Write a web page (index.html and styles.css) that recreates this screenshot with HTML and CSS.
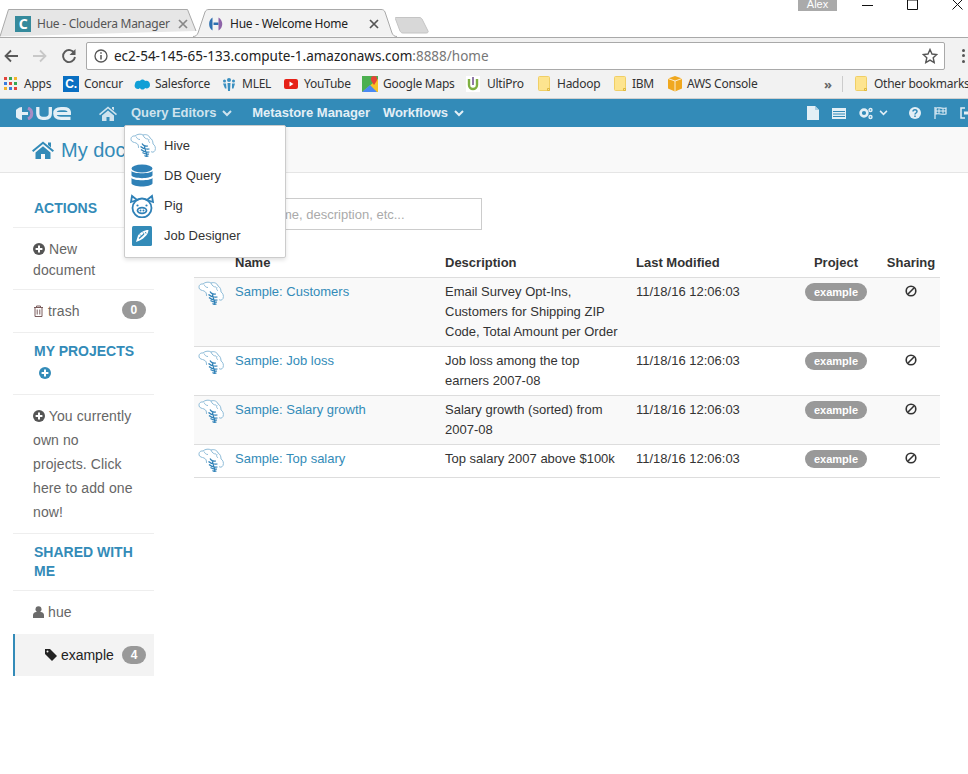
FILE: index.html
```html
<!DOCTYPE html>
<html lang="en">
<head>
<meta charset="utf-8">
<title>Hue - Welcome Home</title>
<link rel="stylesheet" href="styles.css">
</head>
<body>
<svg class="defs" width="0" height="0" aria-hidden="true">
  <symbol id="hive" viewBox="0 0 26 26">
    <path d="M1.500 8C0 5 2 2.500 5 3c2-2 6-2.500 8-1 3-1 6 0 7 3 2 1 3 3 3 6 2 1 3 4 2 6.500-1 2-3 2-4 1" fill="#fff" stroke="#8fbcd8" stroke-width="1"/>
    <path d="M1.500 8c2 2 4 1 6 3 1 1 1 3 1 4M6 3.500c1 2 2 3 4 3M13 2c1 3 3 4 5 4M19 6c-1 2 0 3 1 4" fill="none" stroke="#8fbcd8" stroke-width="1"/>
    <path d="M12 10.500c1 2 3 3 6 2.500M10.500 13.500c2 2 5 3 9 2.500M11 16.500c2 2 5 3 8.500 2.500M12.500 19.500c2 1.500 4 2 6.500 1.500M14.500 22.500c1 .8 2.500 1 4 .5M14 12l3 11" fill="none" stroke="#2f81b7" stroke-width="1.200"/>
  </symbol>
  <symbol id="ban" viewBox="0 0 12 12">
    <circle cx="6" cy="6" r="4.800" fill="none" stroke="#333" stroke-width="1.600"/>
    <path d="M2.800 9.200L9.200 2.800" stroke="#333" stroke-width="1.600"/>
  </symbol>
  <symbol id="plus" viewBox="0 0 12 12">
    <circle cx="6" cy="6" r="6"/>
    <path d="M6 2.600v6.800M2.600 6h6.800" stroke="#fff" stroke-width="2"/>
  </symbol>
  <symbol id="folder" viewBox="0 0 12 16">
    <path d="M.5 1.500A1 1 0 0 1 1.500.5h9a1 1 0 0 1 1 1v13h-10a1 1 0 0 1-1-1z" fill="#fde48f" stroke="#f0cf66"/>
    <path d="M9.500 12.500h2v2h-2z" fill="none" stroke="#e0b93f"/>
  </symbol>
  <symbol id="tabx" viewBox="0 0 10 10">
    <path d="M1 1l8 8M9 1L1 9" fill="none" stroke="currentColor" stroke-width="1.700"/>
  </symbol>
</svg>

<header class="browser">
  <div class="tabstrip">
    <div class="tab tab-back">
      <svg class="tab-shape" viewBox="0 0 197 28" width="197" height="28"><path d="M0 27.500L8.500.5H187.500L196 22" fill="#e6e6e6" stroke="#a9a9a9"/></svg>
      <span class="favicon fav-c">C</span>
      <span class="tab-title">Hue - Cloudera Manager</span>
      <svg class="tab-x" width="10" height="10"><use href="#tabx"/></svg>
    </div>
    <div class="tab tab-front">
      <svg class="tab-shape" viewBox="0 0 204 28" width="204" height="28"><path d="M0 27.500C3 27.500 4 26 5 24L12 3C13 1 14 .5 16 .5H188C190 .5 191 1 192 3L199 24C200 26 201 27.500 204 27.500" fill="#f2f2f2" stroke="#a9a9a9"/></svg>
      <svg class="favicon" viewBox="0 0 16 16" width="16" height="16"><path d="M4.500 1.500C0 4 0 12 4.500 14.500z" fill="#2d6fb0"/><path d="M5.500 6.500h5v2.500h-5z" fill="#2d6fb0"/><path d="M10.500 1.500c5 3 5 10 0 13z" fill="#8e63a8"/></svg>
      <span class="tab-title tab-title-dark">Hue - Welcome Home</span>
      <svg class="tab-x tab-x-dark" width="10" height="10"><use href="#tabx"/></svg>
    </div>
    <svg class="newtab" viewBox="0 0 34 18" width="34" height="18"><path d="M1 1.500H24C26 1.500 26 2 27 3L33 15C33.500 16 33 17 31 17H8C6 17 6 16 5 15L.5 3C0 2 0 1.500 1 1.500z" fill="#d8d8d8" stroke="#c4c4c4"/></svg>
    <div class="tab-spacer"></div>
    <span class="profile">Alex</span>
    <div class="winctl">
      <svg viewBox="0 0 11 10" width="11" height="10"><path d="M0 5.500H11" stroke="#111"/></svg>
      <svg viewBox="0 0 11 10" width="11" height="10"><path d="M.5 -1V9.500H10.500V-1" fill="none" stroke="#111"/><path d="M.5 0H10.500" stroke="#111"/></svg>
      <svg viewBox="0 0 11 10" width="11" height="10"><path d="M.5 -.5L10.500 9.500M10.500 -.5L.5 9.500" stroke="#111"/></svg>
    </div>
  </div>

  <div class="toolbar">
    <svg class="tool" viewBox="0 0 16 16" width="16" height="16"><path d="M15 8H2.500M8 2.500L2.500 8 8 13.500" fill="none" stroke="#5a5a5a" stroke-width="1.800"/></svg>
    <svg class="tool" viewBox="0 0 16 16" width="16" height="16"><path d="M1 8h12.500M8 2.500L13.500 8 8 13.500" fill="none" stroke="#c8c8c8" stroke-width="1.800"/></svg>
    <svg class="tool" viewBox="0 0 16 16" width="16" height="16"><path d="M13.500 5.500A6 6 0 1 0 14 9" fill="none" stroke="#5a5a5a" stroke-width="1.900"/><path d="M14.500 1v6h-6z" fill="#5a5a5a"/></svg>
    <div class="omnibox">
      <svg class="info" viewBox="0 0 14 14" width="14" height="14"><circle cx="7" cy="7" r="6" fill="none" stroke="#555" stroke-width="1.300"/><path d="M7 6v4.500M7 3.300v1.500" stroke="#555" stroke-width="1.500"/></svg>
      <span class="url">ec2-54-145-65-133.compute-1.amazonaws.com<span class="url-dim">:8888/home</span></span>
      <svg class="star" viewBox="0 0 16 16" width="16" height="16"><path d="M8 1.500l2 4.500 4.800.5-3.600 3.200 1 4.800L8 12.100l-4.200 2.400 1-4.800L1.200 6.500 6 6z" fill="none" stroke="#555" stroke-width="1.400"/></svg>
    </div>
    <div class="kebab"><i></i><i></i><i></i></div>
  </div>

  <div class="bookmarks">
    <span class="bm bm-apps">
      <svg viewBox="0 0 14 14" width="14" height="14"><g><rect width="3" height="3" fill="#e2453c"/><rect x="5" width="3" height="3" fill="#35a853"/><rect x="10" width="3" height="3" fill="#f3b32a"/><rect y="5" width="3" height="3" fill="#3b7de0"/><rect x="5" y="5" width="3" height="3" fill="#e2453c"/><rect x="10" y="5" width="3" height="3" fill="#35a853"/><rect y="10" width="3" height="3" fill="#f3b32a"/><rect x="5" y="10" width="3" height="3" fill="#3b7de0"/><rect x="10" y="10" width="3" height="3" fill="#e2453c"/></g></svg>
      Apps</span>
    <span class="bm bm-concur"><span class="ico-concur">C.</span>Concur</span>
    <span class="bm bm-sf"><svg viewBox="0 0 16 12" width="16" height="12"><path d="M4 11C1 11 0 8 1 6c0-3 3-4 5-3 1-2 4-2 5 0 3-1 5 1 5 4s-3 4-5 3c-1 2-4 2-5 0-1 1-2 1-2 1z" fill="#109fd6"/></svg>Salesforce</span>
    <span class="bm bm-mlel"><svg viewBox="0 0 16 16" width="16" height="16"><g fill="#3a8fc0"><circle cx="8" cy="4" r="2"/><circle cx="3.500" cy="5" r="1.500"/><circle cx="12.500" cy="5" r="1.500"/><path d="M6.500 7h3l-.5 8H7zM2 7.500h3l.5 5H4zM11 7.500h3l-1.500 5h-1.500z"/></g></svg>MLEL</span>
    <span class="bm bm-yt"><svg viewBox="0 0 14 10" width="14" height="10"><rect width="14" height="10" rx="2" fill="#e62117"/><path d="M5.500 2.500v5l4-2.500z" fill="#fff"/></svg>YouTube</span>
    <span class="bm bm-maps"><svg viewBox="0 0 16 16" width="16" height="16"><path d="M0 0h16v16H0z" fill="#4caf50"/><path d="M0 16L16 3v13z" fill="#f7c325"/><path d="M0 16L8 9l7 7z" fill="#4a89f3"/><path d="M12 0c-3 0-4 3-2 6l2 3 2-3c2-3 1-6-2-6z" fill="#e64335"/></svg>Google Maps</span>
    <span class="bm bm-ulti"><svg viewBox="0 0 14 16" width="14" height="16"><rect width="14" height="16" fill="#fff"/><path d="M3 3v6a4 4 0 0 0 8 0V3" fill="none" stroke="#7fb042" stroke-width="2.400"/><path d="M7 1v8" stroke="#6b4d8a" stroke-width="1.500"/></svg>UltiPro</span>
    <span class="bm bm-hadoop"><svg width="12" height="16"><use href="#folder"/></svg>Hadoop</span>
    <span class="bm bm-ibm"><svg width="12" height="16"><use href="#folder"/></svg>IBM</span>
    <span class="bm bm-aws"><svg viewBox="0 0 16 16" width="16" height="16"><path d="M8 0l7 2.500v10L8 15.500 1 12.500v-10z" fill="#f0a81f"/><path d="M1 2.500L8 5l7-2.500M8 5v10.500" fill="none" stroke="#fff" stroke-width=".8"/></svg>AWS Console</span>
    <span class="bm-more">»</span>
    <span class="bm-sep"></span>
    <span class="bm bm-other"><svg width="12" height="16"><use href="#folder"/></svg>Other bookmarks</span>
  </div>
</header>

<nav class="topnav">
  <svg class="logo" viewBox="0 0 55 13" width="55" height="13">
    <path d="M6 0A7 6.500 0 0 0 6 13zM6 5h6v3H6z" fill="#e3eff6"/>
    <path d="M12 1c5 2 5 9 0 11" fill="none" stroke="#a78cc4" stroke-width="3"/>
    <path d="M21.800 0v6.500c0 3.500 2 4.800 5 4.800h2.500c3 0 5-1.300 5-4.800V0" fill="none" stroke="#e3eff6" stroke-width="3.300"/>
    <path d="M39 6.500H53.500C53.500 3 51 1.600 48 1.600H45C41 1.600 38.800 3 38.800 6.500C38.800 10 41 11.400 45 11.400H54.500" fill="none" stroke="#e3eff6" stroke-width="3.200"/>
  </svg>
  <svg class="nav-home" viewBox="0 0 18 15" width="18" height="15"><path d="M9 .5l9 7.500-1 1.200L9 2.600 1 9.200 0 8z" fill="#cfe3ee"/><path d="M3 9.500L9 4.500l6 5V15h-4.500v-4h-3v4H3z" fill="#cfe3ee"/><path d="M13 1h2v3.500l-2-1.700z" fill="#cfe3ee"/></svg>
  <span class="nav-item nav-active">Query Editors<svg class="chev" viewBox="0 0 10 7" width="10" height="7"><path d="M1 1l4 4 4-4" fill="none" stroke="currentColor" stroke-width="2"/></svg></span>
  <span class="nav-item">Metastore Manager</span>
  <span class="nav-item">Workflows<svg class="chev" viewBox="0 0 10 7" width="10" height="7"><path d="M1 1l4 4 4-4" fill="none" stroke="currentColor" stroke-width="2"/></svg></span>
  <div class="nav-spacer"></div>
  <div class="nav-tools">
    <svg viewBox="0 0 12 14" width="12" height="14"><path d="M0 0h8l4 4v10H0z" fill="#e3eff6"/><path d="M8 0v4h4" fill="#a8cde2"/></svg>
    <svg viewBox="0 0 14 11" width="14" height="11"><rect width="14" height="11" fill="#e3eff6"/><path d="M1 3.500h12M1 6h12M1 8.500h12" stroke="#338bb8"/></svg>
    <span class="nav-gears">
      <svg viewBox="0 0 14 13" width="14" height="13"><circle cx="5" cy="6" r="3.400" fill="none" stroke="#e3eff6" stroke-width="2.600"/><circle cx="11.500" cy="3" r="1.500" fill="none" stroke="#e3eff6" stroke-width="1.400"/><circle cx="11.500" cy="10" r="1.500" fill="none" stroke="#e3eff6" stroke-width="1.400"/></svg>
      <svg class="chev-light" viewBox="0 0 10 7" width="9" height="6"><path d="M1 1l4 4 4-4" fill="none" stroke="#e3eff6" stroke-width="1.800"/></svg>
    </span>
    <svg class="tool-help" viewBox="0 0 12 12" width="12" height="12"><circle cx="6" cy="6" r="6" fill="#e3eff6"/><path d="M4 4.500c0-2.500 4-2.500 4 0 0 1.500-2 1.500-2 3M6 8.500v1.500" fill="none" stroke="#338bb8" stroke-width="1.500"/></svg>
    <svg viewBox="0 0 13 12" width="13" height="12"><path d="M1 0v12" stroke="#e3eff6" stroke-width="1.200"/><path d="M2 1c3-1 5 1 10 0v6c-4 1-7-1-10 0z" fill="none" stroke="#e3eff6" stroke-width="1.200"/><path d="M5 1.500v5M9 1.500v5M2 4h10" stroke="#e3eff6"/></svg>
    <svg class="tool-exit" viewBox="0 0 13 12" width="13" height="12"><path d="M5 1H1v10h4" fill="none" stroke="#e3eff6" stroke-width="1.500"/><path d="M4 4.500h5V2l4 4-4 4V7.500H4z" fill="#e3eff6"/></svg>
  </div>

  <ul class="dropdown">
    <li><svg width="26" height="26"><use href="#hive"/></svg><span>Hive</span></li>
    <li><svg class="d-db" viewBox="0 0 22 24" width="22" height="24"><g fill="#2f81b7"><ellipse cx="11" cy="4.500" rx="10.500" ry="4"/><path d="M.5 7c2 3 19 3 21 0v4.500c-2 3.500-19 3.500-21 0zM.5 14c2 3 19 3 21 0v5.500c-2 4-19 4-21 0z"/></g></svg><span>DB Query</span></li>
    <li><svg viewBox="0 0 24 24" width="24" height="24"><g fill="none" stroke="#2f81b7" stroke-width="1.800"><circle cx="12" cy="14" r="9.500"/><path d="M7 6L1 8l1-6zM17 6l6 2-1-6z" fill="#fff"/><ellipse cx="12" cy="16.500" rx="4.500" ry="2.800"/></g><circle cx="10.500" cy="16.500" r="1" fill="#2f81b7"/><circle cx="13.500" cy="16.500" r="1" fill="#2f81b7"/><circle cx="7.500" cy="11.500" r="1.100" fill="#2f81b7"/><circle cx="16.500" cy="11.500" r="1.100" fill="#2f81b7"/></svg><span>Pig</span></li>
    <li><svg class="d-job" viewBox="0 0 20 20" width="20" height="20"><rect width="20" height="20" rx="1.500" fill="#338bb8"/><path d="M4 16L6 9.500C8 6.500 12 4 16.500 4L16 6.500C14 11 9 14.500 4 16z" fill="#fff"/><path d="M7 12.500L12 8" stroke="#338bb8" stroke-width="1.200"/><path d="M8 8.500l1.200 1.200M11 6.500l1 1.300M13.500 6l.5 1.500" stroke="#338bb8" stroke-width="1"/></svg><span>Job Designer</span></li>
  </ul>
</nav>

<div class="pagehead">
  <svg viewBox="0 0 22 18" width="22" height="18"><path d="M11 .5l11 9-1.300 1.500L11 3 1.300 11 0 9.500z" fill="#338bb8"/><path d="M3.500 11.500L11 5.300l7.500 6.200V18h-5.500v-5H9v5H3.500z" fill="#338bb8"/><path d="M16 1.500h3v5l-3-2.500z" fill="#338bb8"/></svg>
  <h1>My documents</h1>
</div>

<main class="layout">
  <aside class="sidebar">
    <h2 class="side-head side-actions">ACTIONS</h2>
    <div class="side-row side-new"><svg class="ico" width="12" height="12"><use href="#plus"/></svg> New document</div>
    <div class="side-row side-trash"><span><svg class="ico" viewBox="0 0 11 12" width="11" height="12"><path d="M1 2.500h9M3.500 2.500V1h4v1.500M2 2.500V11.500h7V2.500M4.200 4.500v5M6.800 4.500v5" fill="none" stroke="#7a5c5c" stroke-width="1"/></svg> trash</span><b class="count">0</b></div>
    <h2 class="side-head side-projects">MY PROJECTS<svg class="head-plus" width="12" height="12"><use href="#plus"/></svg></h2>
    <div class="side-row side-own"><svg class="ico" width="12" height="12"><use href="#plus"/></svg> You currently own no projects. Click here to add one now!</div>
    <h2 class="side-head side-shared">SHARED WITH ME</h2>
    <div class="side-row side-hue"><svg class="ico" viewBox="0 0 11 12" width="11" height="12"><circle cx="5.500" cy="3.200" r="3" fill="#6b6b6b"/><path d="M0 12V9c0-2 2-3 3-3h5c1 0 3 1 3 3v3z" fill="#6b6b6b"/></svg> hue</div>
    <div class="side-tag"><span><svg class="ico" viewBox="0 0 12 12" width="12" height="12"><path d="M0 0h5l7 7-5 5-7-7z" fill="#222"/><circle cx="2.500" cy="2.500" r="1" fill="#f3f3f3"/></svg> example</span><b class="count">4</b></div>
  </aside>

  <section class="content">
    <div class="search"><input class="search-input" type="text" placeholder="Search for name, description, etc..."></div>
    <table class="docs">
      <thead>
        <tr><th class="c-icon"></th><th class="c-name">Name</th><th class="c-desc">Description</th><th class="c-date">Last Modified</th><th class="c-proj">Project</th><th class="c-share">Sharing</th></tr>
      </thead>
      <tbody>
        <tr class="odd">
          <td class="c-icon"><svg width="26" height="26"><use href="#hive"/></svg></td>
          <td><a>Sample: Customers</a></td>
          <td class="c-desc">Email Survey Opt-Ins, Customers for Shipping ZIP Code, Total Amount per Order</td>
          <td>11/18/16 12:06:03</td>
          <td class="c-proj"><span class="pill">example</span></td>
          <td class="c-share"><svg width="12" height="12"><use href="#ban"/></svg></td>
        </tr>
        <tr>
          <td class="c-icon"><svg width="26" height="26"><use href="#hive"/></svg></td>
          <td><a>Sample: Job loss</a></td>
          <td class="c-desc">Job loss among the top earners 2007-08</td>
          <td>11/18/16 12:06:03</td>
          <td class="c-proj"><span class="pill">example</span></td>
          <td class="c-share"><svg width="12" height="12"><use href="#ban"/></svg></td>
        </tr>
        <tr class="odd">
          <td class="c-icon"><svg width="26" height="26"><use href="#hive"/></svg></td>
          <td><a>Sample: Salary growth</a></td>
          <td class="c-desc">Salary growth (sorted) from 2007-08</td>
          <td>11/18/16 12:06:03</td>
          <td class="c-proj"><span class="pill">example</span></td>
          <td class="c-share"><svg width="12" height="12"><use href="#ban"/></svg></td>
        </tr>
        <tr>
          <td class="c-icon"><svg width="26" height="26"><use href="#hive"/></svg></td>
          <td><a>Sample: Top salary</a></td>
          <td class="c-desc">Top salary 2007 above $100k</td>
          <td>11/18/16 12:06:03</td>
          <td class="c-proj"><span class="pill">example</span></td>
          <td class="c-share"><svg width="12" height="12"><use href="#ban"/></svg></td>
        </tr>
      </tbody>
    </table>
  </section>
</main>
</body>
</html>
```

FILE: styles.css
```css
* { box-sizing: border-box; }
html, body { margin: 0; padding: 0; }
body {
  width: 968px;
  height: 774px;
  overflow: hidden;
  background: #fff;
  color: #333;
  font: 14px/20px "Liberation Sans", Arial, sans-serif;
}
svg { display: block; flex: none; }
.defs { position: absolute; }

/* browser chrome */
.tabstrip {
  height: 38px;
  display: flex;
  align-items: flex-start;
  border-bottom: 1px solid #a9a9a9;
  font: 12px/16px "Noto Sans", sans-serif;
  letter-spacing: -.25px;
}
.tab { position: relative; height: 38px; padding-top: 10px; display: flex; align-items: center; }
.tab-shape { position: absolute; left: 0; top: 9px; }
.tab-back { width: 193px; padding-left: 15px; height: 37px; }
.tab-front { width: 202px; padding-left: 15px; }
.tab > .favicon, .tab > span, .tab > .tab-x { position: relative; }
.tab-back .tab-title { margin-left: 6px; color: #555; }
.tab-front .tab-title { margin-left: 6px; color: #222; }
.favicon { width: 16px; height: 16px; }
.fav-c { background: #358a9c; color: #fff; font-weight: 700; font-size: 14px; text-align: center; line-height: 16px; }
.tab-title { width: 141px; white-space: nowrap; }
.tab-front .tab-title { width: 139px; }
.tab-x { color: #888; }
.tab-x-dark { color: #555; }
.newtab { margin-top: 16px; }
.tab-spacer { flex: 1; }
.profile {
  width: 39px; height: 11px; background: #aaa; color: #fff;
  font: 11px/8px "Liberation Sans", sans-serif; text-align: center;
  overflow: hidden; margin-right: 25px; letter-spacing: 0;
}
.winctl { display: flex; gap: 34px; width: 106px; }

.toolbar {
  height: 32px;
  display: flex;
  align-items: center;
  background: #f2f2f2;
  padding: 3px 0 0 3px;
}
.tool { margin-right: 13px; }
.omnibox {
  width: 859px; height: 28px; margin-left: -4px;
  flex: none;
  display: flex; align-items: center;
  background: #fff; border: 1px solid #a9a9a9; border-radius: 2px;
  padding: 0 6px 0 7px;
}
.url { flex: 1; margin-left: 6px; font: 13.5px/20px "Noto Sans", sans-serif; color: #222; white-space: nowrap; }
.url-dim { color: #777; }
.kebab { margin-left: 17px; display: flex; flex-direction: column; gap: 2.500px; }
.kebab i { display: block; width: 3px; height: 3px; background: #555; border-radius: 50%; }

.bookmarks {
  height: 29px;
  display: flex;
  align-items: center;
  background: #f2f2f2;
  border-bottom: 1px solid #d0d0d0;
  padding-left: 4px;
  font: 12px/16px "Noto Sans", sans-serif;
  letter-spacing: -.25px;
  color: #333;
  white-space: nowrap;
  overflow: hidden;
}
.bm { display: flex; align-items: center; gap: 5px; flex: none; }
.bm-apps { width: 59px; gap: 6px; }
.bm-concur { width: 71px; }
.bm-sf { width: 87px; }
.bm-mlel { width: 63px; }
.bm-yt { width: 78px; gap: 6px; }
.bm-maps { width: 104px; }
.bm-ulti { width: 72px; gap: 7px; }
.bm-hadoop { width: 76px; gap: 7px; }
.bm-ibm { width: 53px; gap: 6px; }
.bm-aws { width: 157px; gap: 4px; }
.bm-more { width: 18px; flex: none; font-weight: 700; font-size: 13px; color: #666; }
.bm-sep { width: 1px; height: 16px; flex: none; background: #ccc; margin-right: 12px; }
.bm-other { gap: 7px; }
.ico-concur { width: 16px; height: 16px; background: #0a6fc2; color: #fff; font: 700 12px/16px "Liberation Sans", sans-serif; text-align: center; }

/* hue nav */
.topnav {
  position: relative;
  height: 28px;
  display: flex;
  align-items: center;
  background: #338bb8;
  color: #e3eff6;
  font-weight: 700;
  font-size: 13px;
  letter-spacing: -.05px;
  padding-left: 16px;
}
.logo { margin-right: 28px; }
.nav-home { margin-right: 14px; }
.nav-item { display: flex; align-items: center; margin-right: 13px; white-space: nowrap; }
.nav-active { color: #cfe3ee; margin-right: 20px; }
.chev { margin-left: 6px; }
.nav-spacer { flex: 1; }
.nav-tools { display: flex; align-items: center; gap: 13px; margin-right: -7px; width: 168px; flex: none; }
.nav-gears { display: flex; align-items: center; gap: 6px; margin-right: 8px; }
.dropdown {
  position: absolute;
  left: 124px;
  top: 26px;
  width: 162px;
  height: 133px;
  margin: 0;
  padding: 5px 0 0 5px;
  list-style: none;
  background: #fff;
  border: 1px solid #ccc;
  border-radius: 2px;
  box-shadow: 0 2px 4px rgba(0,0,0,.12);
  font-weight: 400;
  font-size: 12px;
  letter-spacing: 0;
  color: #333;
  z-index: 5;
}
.dropdown li { height: 30px; display: flex; align-items: center; font-size: 13px; }
.dropdown .d-db { margin-left: 1px; }
.dropdown .d-job { margin-left: 2px; }
.dropdown li span { position: absolute; left: 39px; }

/* page header */
.pagehead {
  height: 46px;
  display: flex;
  align-items: center;
  gap: 7px;
  padding-left: 32px;
  background: #f9f9f9;
  border-bottom: 1px solid #e5e5e5;
}
.pagehead h1 { margin: 0; font-size: 20px; font-weight: 400; color: #338bb8; line-height: 28px; }

/* layout */
.layout { display: flex; align-items: flex-start; padding-left: 13px; }
.sidebar { width: 141px; }
.side-head {
  margin: 0;
  padding: 0 0 0 21px;
  font-size: 14px;
  line-height: 19px;
  font-weight: 700;
  color: #338bb8;
  border-bottom: 1px solid #eee;
}
.side-actions { height: 55px; padding-top: 26px; }
.side-projects { height: 62px; padding-top: 9px; }
.side-shared { height: 57px; padding: 9px 20px 0 21px; }
.head-plus { fill: #338bb8; margin: 6px 0 0 5px; }
.side-row { padding: 0 20px; color: #666; border-bottom: 1px solid #eee; letter-spacing: .1px; }
.ico { display: inline-block; vertical-align: -1px; fill: #555; }
.side-new { height: 62px; padding-top: 11px; line-height: 21px; }
.side-trash { height: 43px; padding-top: 11px; padding-right: 8px; display: flex; justify-content: space-between; align-items: flex-start; }
.side-own { height: 139px; padding-top: 9px; line-height: 24px; }
.side-hue { height: 43px; padding-top: 11px; border-bottom: 0; }
.side-tag {
  height: 42px;
  padding: 0 8px 0 30px;
  display: flex; align-items: center; justify-content: space-between;
  background: #f3f3f3;
  border-left: 2px solid #338bb8;
  color: #222;
}
.count {
  width: 24px; height: 18px; border-radius: 9px;
  background: #999; color: #fff;
  font-size: 12px; line-height: 18px; text-align: center;
}

.content { width: 746px; margin-left: 40px; font-size: 13px; }
.search { height: 76px; padding-top: 25px; }
.search-input {
  width: 288px; height: 32px; margin: 0;
  padding: 0 8px;
  border: 1px solid #ccc;
  font: 13px/20px "Liberation Sans", sans-serif;
  background: #fff;
}
.search-input::placeholder { color: #aaa; }
.docs { width: 746px; border-collapse: collapse; table-layout: fixed; }
.docs th, .docs td { padding: 4px 8px 4px 0; text-align: left; vertical-align: top; border-bottom: 1px solid #ddd; }
.docs th { height: 28px; font-weight: 700; line-height: 20px; }
.docs td.c-desc { padding-right: 14px; }
.docs th.c-proj, .docs td.c-proj { text-align: center; padding-right: 0; }
.docs th.c-share, .docs td.c-share { text-align: center; padding: 4px 0 4px 6px; }
.c-icon { width: 41px; }
.docs td.c-icon { padding: 3px 0 3px 4px; }
.c-name { width: 210px; }
.c-desc { width: 191px; }
.c-date { width: 160px; }
.c-proj { width: 80px; }
.c-share { width: 64px; }
.docs td a { color: #338bb8; }
.odd td { background: #f9f9f9; }
.pill {
  display: inline-block; width: 62px; height: 18px; border-radius: 9px; margin-top: 1px;
  background: #999; color: #fff;
  font-size: 11px; font-weight: 700; line-height: 18px; vertical-align: top;
}
.c-share svg { display: inline-block; vertical-align: -1px; }
```
